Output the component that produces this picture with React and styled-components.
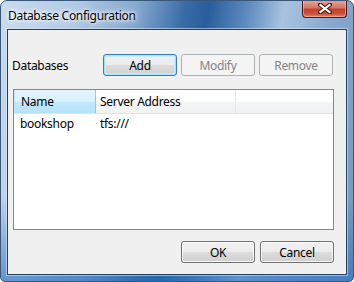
import React from "react";
import styled, { createGlobalStyle } from "styled-components";

const Global = createGlobalStyle`
  html, body { margin: 0; padding: 0; background: #ffffff; }
  body { font-family: "Segoe UI", "Noto Sans", "Open Sans", sans-serif; font-size: 12px; color: #000; letter-spacing: -0.3px; }
`;

const Window = styled.div`
  width: 354px;
  height: 282px;
  box-sizing: border-box;
  display: flex;
  flex-direction: column;
  border-radius: 7px 7px 5px 5px;
  border: 1px solid #3b5777;
  overflow: hidden;
  background:
    linear-gradient(to bottom, rgba(255,255,255,0) 0%, rgba(255,255,255,0) 70%, rgba(40,110,190,0.6) 100%),
    linear-gradient(100deg, #c9dbee 0%, #b3cbe5 18%, #86a9d0 34%, #3a6da6 46%, #285d9b 52%, #5f8cc0 62%, #a8c3e0 71%, #8aabd0 82%, #7096c2 100%);
`;

const TitleBar = styled.div`
  height: 28px;
  display: flex;
  align-items: flex-start;
  justify-content: space-between;
  padding: 0 6px 0 7px;
`;

const Caption = styled.span`
  margin-top: 6px;
  font-size: 12px;
  color: #000;
  text-shadow: 0 0 8px #fff, 0 0 5px #fff, 0 0 3px rgba(255,255,255,0.9);
`;

const CloseButton = styled.div`
  width: 45px;
  height: 18px;
  margin-top: -1px;
  box-sizing: border-box;
  border: 1px solid #4e1a14;
  border-top: none;
  border-radius: 0 0 4px 4px;
  background: linear-gradient(to bottom, #e9a99b 0%, #d47766 45%, #c4402c 55%, #c9503a 80%, #e08a6e 100%);
  box-shadow: inset 0 0 0 1px rgba(255,200,190,0.45);
  display: flex;
  align-items: center;
  justify-content: center;
`;

const Client = styled.div`
  flex: 1;
  margin: 0 6px 6px 6px;
  border: 1px solid #253e5a;
  box-shadow: 0 0 0 1px rgba(220,235,250,0.55);
  background: #f0f0f0;
  display: flex;
  flex-direction: column;
  padding: 24px 12px 11px 5px;
`;

const Toolbar = styled.div`
  display: flex;
  align-items: center;
  height: 22px;
  gap: 4px;
`;

const Label = styled.span`
  width: 87px;
  margin-left: -1px;
  font-size: 12px;
`;

const Button = styled.button`
  width: 74px;
  height: 22px;
  box-sizing: border-box;
  font-family: inherit;
  font-size: 12px;
  letter-spacing: inherit;
  padding: 0;
  border-radius: 3px;
  border: 1px solid ${p => (p.$default ? "#3c7fb1" : p.disabled ? "#adb2b5" : "#707070")};
  color: ${p => (p.disabled ? "#838383" : "#000")};
  background: ${p =>
    p.disabled
      ? "#f4f4f4"
      : "linear-gradient(to bottom, #f2f2f2 0%, #ebebeb 50%, #dddddd 51%, #cfcfcf 100%)"};
  box-shadow: ${p =>
    p.$default
      ? "inset 0 0 0 1px #48d8fb55, inset 0 0 0 2px #c8ecfb"
      : p.disabled
      ? "none"
      : "inset 0 0 0 1px rgba(255,255,255,0.8)"};
`;

const ListView = styled.div`
  margin-top: 13px;
  height: 141px;
  box-sizing: border-box;
  border: 1px solid #828790;
  background: #fff;
  display: flex;
  flex-direction: column;
`;

const Header = styled.div`
  display: flex;
  height: 23px;
  border-bottom: 1px solid #e5e5e5;
  background: linear-gradient(to bottom, #ffffff 0%, #ffffff 50%, #f3f4f6 51%, #f1f2f4 100%);
`;

const HeaderCell = styled.div`
  width: ${p => p.$w}px;
  flex: ${p => (p.$fill ? 1 : "none")};
  box-sizing: border-box;
  padding-left: ${p => p.$pad}px;
  display: flex;
  align-items: center;
  font-size: 12px;
  border-right: ${p => (p.$fill ? "none" : "1px solid #e3e8ee")};
  ${p => p.$hot && `
    background: linear-gradient(to bottom, #e3f5fd 0%, #d9f1fd 50%, #c3e8fb 51%, #b5e2fa 100%);
    border-right: 1px solid #93c9e3;
    border-left: 1px solid #bfe2f5;
  `}
`;

const Row = styled.div`
  display: flex;
  height: 18px;
  align-items: center;
`;

const Cell = styled.div`
  width: ${p => p.$w}px;
  box-sizing: border-box;
  padding-left: ${p => p.$pad}px;
  font-size: 12px;
`;

const Footer = styled.div`
  margin-top: auto;
  display: flex;
  justify-content: flex-end;
  gap: 5px;
`;

export default function App() {
  return (
    <>
      <Global />
      <Window>
        <TitleBar>
          <Caption>Database Configuration</Caption>
          <CloseButton>
            <svg width="14" height="11" viewBox="0 0 14 11">
              <path d="M2 1.5 L12 9.5 M12 1.5 L2 9.5" stroke="#4a1a14" strokeWidth="4.2" strokeLinecap="round" />
              <path d="M2.5 2 L11.5 9 M11.5 2 L2.5 9" stroke="#ffffff" strokeWidth="2.2" strokeLinecap="square" />
            </svg>
          </CloseButton>
        </TitleBar>
        <Client>
          <Toolbar>
            <Label>Databases</Label>
            <Button $default>Add</Button>
            <Button disabled>Modify</Button>
            <Button disabled>Remove</Button>
          </Toolbar>
          <ListView>
            <Header>
              <HeaderCell $w={82} $pad={6} $hot>Name</HeaderCell>
              <HeaderCell $w={140} $pad={4}>Server Address</HeaderCell>
              <HeaderCell $fill />
            </Header>
            <Row>
              <Cell $w={82} $pad={6}>bookshop</Cell>
              <Cell $w={140} $pad={4}>tfs:///</Cell>
            </Row>
          </ListView>
          <Footer>
            <Button>OK</Button>
            <Button>Cancel</Button>
          </Footer>
        </Client>
      </Window>
    </>
  );
}
